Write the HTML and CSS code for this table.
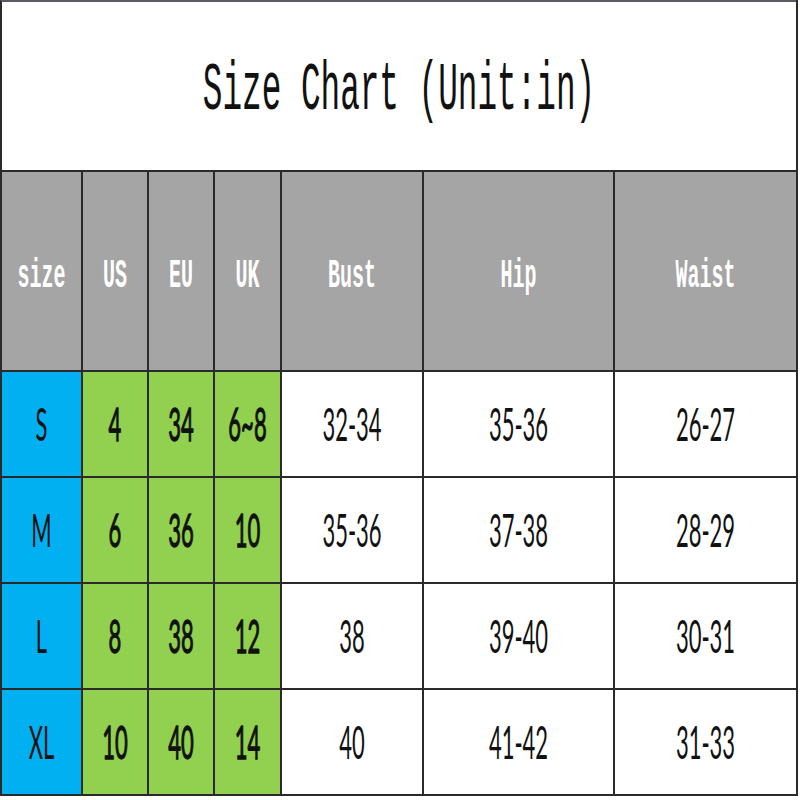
FILE: index.html
```html
<!DOCTYPE html>
<html>
<head>
<meta charset="utf-8">
<link rel="stylesheet" href="styles.css">
</head>
<body>
<div class="chart">
  <div class="cell title"><span class="title-text">Size Chart (Unit:in)</span></div>

  <div class="cell head"><span class="head-text">size</span></div>
  <div class="cell head"><span class="head-text">US</span></div>
  <div class="cell head"><span class="head-text">EU</span></div>
  <div class="cell head"><span class="head-text">UK</span></div>
  <div class="cell head"><span class="head-text">Bust</span></div>
  <div class="cell head"><span class="head-text">Hip</span></div>
  <div class="cell head"><span class="head-text">Waist</span></div>

  <div class="cell blue"><span class="val">S</span></div>
  <div class="cell green"><span class="val">4</span></div>
  <div class="cell green"><span class="val">34</span></div>
  <div class="cell green"><span class="val">6~8</span></div>
  <div class="cell white"><span class="val">32-34</span></div>
  <div class="cell white"><span class="val">35-36</span></div>
  <div class="cell white"><span class="val">26-27</span></div>

  <div class="cell blue"><span class="val">M</span></div>
  <div class="cell green"><span class="val">6</span></div>
  <div class="cell green"><span class="val">36</span></div>
  <div class="cell green"><span class="val">10</span></div>
  <div class="cell white"><span class="val">35-36</span></div>
  <div class="cell white"><span class="val">37-38</span></div>
  <div class="cell white"><span class="val">28-29</span></div>

  <div class="cell blue"><span class="val">L</span></div>
  <div class="cell green"><span class="val">8</span></div>
  <div class="cell green"><span class="val">38</span></div>
  <div class="cell green"><span class="val">12</span></div>
  <div class="cell white"><span class="val">38</span></div>
  <div class="cell white"><span class="val">39-40</span></div>
  <div class="cell white"><span class="val">30-31</span></div>

  <div class="cell blue"><span class="val">XL</span></div>
  <div class="cell green"><span class="val">10</span></div>
  <div class="cell green"><span class="val">40</span></div>
  <div class="cell green"><span class="val">14</span></div>
  <div class="cell white"><span class="val">40</span></div>
  <div class="cell white"><span class="val">41-42</span></div>
  <div class="cell white"><span class="val">31-33</span></div>
</div>
</body>
</html>
```

FILE: styles.css
```css
html, body {
  margin: 0;
  padding: 0;
  background: #ffffff;
}

.chart {
  display: grid;
  grid-template-columns: 81px 66px 66px 67px 142px 191px 183px;
  grid-template-rows: 170px 200px 106px 106px 106px 106px;
  width: 798px;
  border-right: 2px solid #2a2a2a;
  border-bottom: 2px solid #2a2a2a;
  box-sizing: border-box;
}

.cell {
  box-sizing: border-box;
  border-top: 2px solid #2a2a2a;
  border-left: 2px solid #2a2a2a;
  display: flex;
  align-items: center;
  justify-content: center;
  overflow: hidden;
}

.title {
  grid-column: 1 / -1;
  background: #ffffff;
  border-top-color: #5a5a66;
  padding-top: 14px;
}

.title-text {
  display: inline-block;
  font-family: "Liberation Mono", monospace;
  font-size: 32.7px;
  line-height: 1;
  color: #111;
  transform: scaleY(2.1);
  white-space: nowrap;
}

.head {
  background: #a5a5a5;
  padding-top: 12px;
}

.head-text {
  display: inline-block;
  font-family: "Liberation Mono", monospace;
  font-size: 20px;
  font-weight: bold;
  line-height: 1;
  color: #ffffff;
  transform: scaleY(2.0);
  white-space: nowrap;
}

.blue {
  background: #00b0f0;
}

.green {
  background: #92d050;
}

.white {
  background: #ffffff;
}

.val {
  display: inline-block;
  font-family: Lato, "Liberation Sans", sans-serif;
  font-size: 22px;
  line-height: 1;
  color: #111;
  transform: scaleY(2.1);
  white-space: nowrap;
}

.green .val {
  -webkit-text-stroke: 0.6px #111;
}
```
